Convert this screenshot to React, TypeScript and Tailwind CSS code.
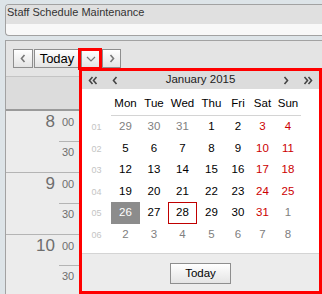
import React from 'react';

type Cell = { d: number; other?: boolean; weekend?: boolean; selected?: boolean; today?: boolean };

const WEEKS: { no: string; days: Cell[] }[] = [
  { no: '01', days: [{ d: 29, other: true }, { d: 30, other: true }, { d: 31, other: true }, { d: 1 }, { d: 2 }, { d: 3, weekend: true }, { d: 4, weekend: true }] },
  { no: '02', days: [{ d: 5 }, { d: 6 }, { d: 7 }, { d: 8 }, { d: 9 }, { d: 10, weekend: true }, { d: 11, weekend: true }] },
  { no: '03', days: [{ d: 12 }, { d: 13 }, { d: 14 }, { d: 15 }, { d: 16 }, { d: 17, weekend: true }, { d: 18, weekend: true }] },
  { no: '04', days: [{ d: 19 }, { d: 20 }, { d: 21 }, { d: 22 }, { d: 23 }, { d: 24, weekend: true }, { d: 25, weekend: true }] },
  { no: '05', days: [{ d: 26, selected: true }, { d: 27 }, { d: 28, today: true }, { d: 29 }, { d: 30 }, { d: 31, weekend: true }, { d: 1, other: true }] },
  { no: '06', days: [{ d: 2, other: true }, { d: 3, other: true }, { d: 4, other: true }, { d: 5, other: true }, { d: 6, other: true }, { d: 7, other: true }, { d: 8, other: true }] },
];

const DAY_NAMES = ['Mon', 'Tue', 'Wed', 'Thu', 'Fri', 'Sat', 'Sun'];
const COLS = 'grid grid-cols-[29px_28px_29px_29px_24px_25px_26px]';

// small chevron drawings used by the toolbar and the calendar header
const Chevron = ({ dir, double, className }: { dir: 'left' | 'right' | 'down'; double?: boolean; className?: string }) => {
  if (dir === 'down') {
    return (
      <svg width="10" height="6" viewBox="0 0 10 6" className={className}>
        <polyline points="1,1 5,5 9,1" fill="none" stroke="currentColor" strokeWidth="1.2" />
      </svg>
    );
  }
  const pts = dir === 'left' ? '4.5,1 1.5,4.5 4.5,8' : '1.5,1 4.5,4.5 1.5,8';
  return (
    <svg width={double ? 10 : 6} height="9" viewBox={`0 0 ${double ? 10 : 6} 9`} className={className}>
      <polyline points={pts} fill="none" stroke="currentColor" strokeWidth="1.6" />
      {double && (
        <polyline points={pts} transform="translate(4 0)" fill="none" stroke="currentColor" strokeWidth="1.6" />
      )}
    </svg>
  );
};

const ToolButton = ({ children, w }: { children: React.ReactNode; w: string }) => (
  <div className={`${w} h-[19px] flex items-center justify-center border border-[#8e8e8e] bg-gradient-to-b from-white to-[#e4e4e4] text-[13px] text-black`}>
    {children}
  </div>
);

const HourBlock = ({ hour }: { hour: number }) => (
  <div className="border-b border-[#b4b4b4] text-[#6e6e6e]">
    <div className="h-[30px] flex items-start pt-[2px]">
      <span className="w-[49px] text-right text-[17px] leading-[18px]">{hour}</span>
      <span className="ml-[7px] text-[11px] leading-[18px]">00</span>
    </div>
    <div className="h-[31px] border-t border-[#b4b4b4] ml-[53px] w-[22px] flex items-start pt-[1px]">
      <span className="ml-[3px] text-[11px] leading-[18px]">30</span>
    </div>
  </div>
);

export default function App() {
  return (
    <div className="relative w-[322px] h-[294px] overflow-hidden bg-[#dde4e8] pt-[4px] pl-[5px] font-['Liberation_Sans',Arial,sans-serif]">
      {/* page title panel */}
      <div className="h-[32px] border border-r-0 border-[#a2a2a2] rounded-l-[4px] overflow-hidden bg-[#f8f8f8]">
        <div className="h-[19px] bg-[#e0e0e0] pl-[1px] text-[11px] leading-[15px] text-[#333]">Staff Schedule Maintenance</div>
      </div>

      {/* scheduler panel */}
      <div className="mt-[4px] h-[260px] border-t border-l border-[#a2a2a2] bg-[#e4e4e4]">
        <div className="h-[35px] pt-[8px] pl-[7px] flex gap-[1px]">
          <ToolButton w="w-[20px]"><Chevron dir="left" className="text-[#777]" /></ToolButton>
          <ToolButton w="w-[46px]">Today</ToolButton>
          <ToolButton w="w-[20px]"><Chevron dir="down" className="text-[#777]" /></ToolButton>
          <ToolButton w="w-[19px]"><Chevron dir="right" className="text-[#777]" /></ToolButton>
        </div>
        <div className="h-[35px] border-t border-[#c4c4c4] bg-[#dcdcdc] border-b-2 border-b-[#9a9a9a]" />
        <div className="w-[74px] bg-[#ececec]">
          <HourBlock hour={8} />
          <HourBlock hour={9} />
          <HourBlock hour={10} />
        </div>
      </div>

      {/* highlight around the date picker toggle */}
      <div className="absolute left-[78px] top-[48px] w-[24px] h-[22px] border-[3px] border-[#ff0000]" />

      {/* date picker popup */}
      <div className="absolute left-[79px] top-[68px] w-[243px] h-[226px] border-[3px] border-[#ff0000] bg-white flex flex-col text-[11.5px]">
        <div className="h-[18px] bg-[#dcdcdc] flex items-center text-[#444]">
          <div className="w-[22px] flex justify-center"><Chevron dir="left" double /></div>
          <div className="w-[22px] flex justify-center"><Chevron dir="left" /></div>
          <div className="flex-1 text-center text-[#222]">January 2015</div>
          <div className="w-[22px] flex justify-center"><Chevron dir="right" /></div>
          <div className="w-[22px] flex justify-center"><Chevron dir="right" double /></div>
        </div>

        <div className="flex-1 flex">
          <div className="w-[29px] pt-[28px]">
            {WEEKS.map((w) => (
              <div key={w.no} className="h-[21.5px] flex items-center justify-center text-[9px] text-[#c4c4c4]">{w.no}</div>
            ))}
          </div>
          <div>
            <div className={`${COLS} h-[27px] border-b border-[#d4d4d4] items-center text-black`}>
              {DAY_NAMES.map((n) => (
                <div key={n} className="text-center pt-[4px]">{n}</div>
              ))}
            </div>
            {WEEKS.map((w) => (
              <div key={w.no} className={`${COLS} h-[21.5px]`}>
                {w.days.map((c, i) => (
                  <div
                    key={i}
                    className={`flex items-center justify-center ${
                      c.selected
                        ? 'bg-[#8c8c8c] text-white'
                        : c.today
                        ? 'border border-[#c00000] text-black'
                        : c.other
                        ? 'text-[#808080]'
                        : c.weekend
                        ? 'text-[#cc0000]'
                        : 'text-black'
                    }`}
                  >
                    {c.d}
                  </div>
                ))}
              </div>
            ))}
          </div>
        </div>

        <div className="h-[38px] border-t border-[#d4d4d4] bg-[#ececec] flex justify-center pt-[9px]">
          <div className="w-[61px] h-[21px] flex items-center justify-center border border-[#8e8e8e] bg-gradient-to-b from-white to-[#e4e4e4] text-black">
            Today
          </div>
        </div>
      </div>
    </div>
  );
}
